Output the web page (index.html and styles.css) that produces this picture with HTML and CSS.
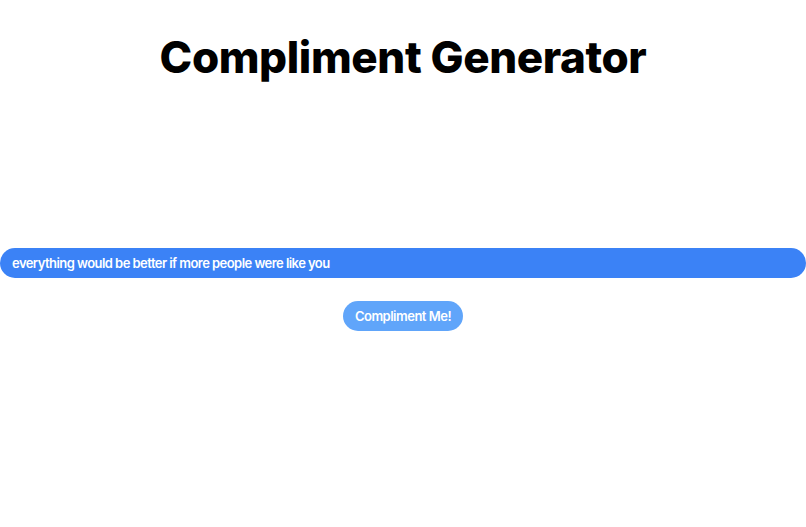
FILE: index.html
```html
<!DOCTYPE html>
<html>
<head>
    <meta charset="UTF-8">
    <title>Compliment Generator</title>
    <link rel="stylesheet" href="styles.css">
</head>
<body>
    <div class="app">
        <h1 class="title">Compliment Generator</h1>
        <div class="compliment">everything would be better if more people were like you</div>
        <button class="btn">Compliment Me!</button>
    </div>
</body>
</html>
```

FILE: styles.css
```css
* { margin: 0; padding: 0; box-sizing: border-box; }
body {
    font-family: Inter, "Noto Sans", sans-serif;
    background: #fff;
    color: #000;
}
.app {
    display: flex;
    flex-direction: column;
    align-items: center;
}
.title {
    margin-top: 33px;
    font-size: 44px;
    line-height: 48px;
    font-weight: 800;
    letter-spacing: -0.4px;
}
.compliment {
    width: 100%;
    margin-top: 167px;
    height: 30px;
    line-height: 30px;
    padding: 0 12px;
    border-radius: 9999px;
    background: #3b82f6;
    color: #fff;
    font-size: 13px;
    font-weight: 600;
    letter-spacing: -0.55px;
}
.btn {
    margin-top: 23px;
    height: 30px;
    padding: 0 12px;
    border: none;
    border-radius: 9999px;
    background: #60a5fa;
    color: #fff;
    font-family: inherit;
    font-size: 13px;
    font-weight: 600;
    letter-spacing: -0.5px;
    cursor: pointer;
}
```
